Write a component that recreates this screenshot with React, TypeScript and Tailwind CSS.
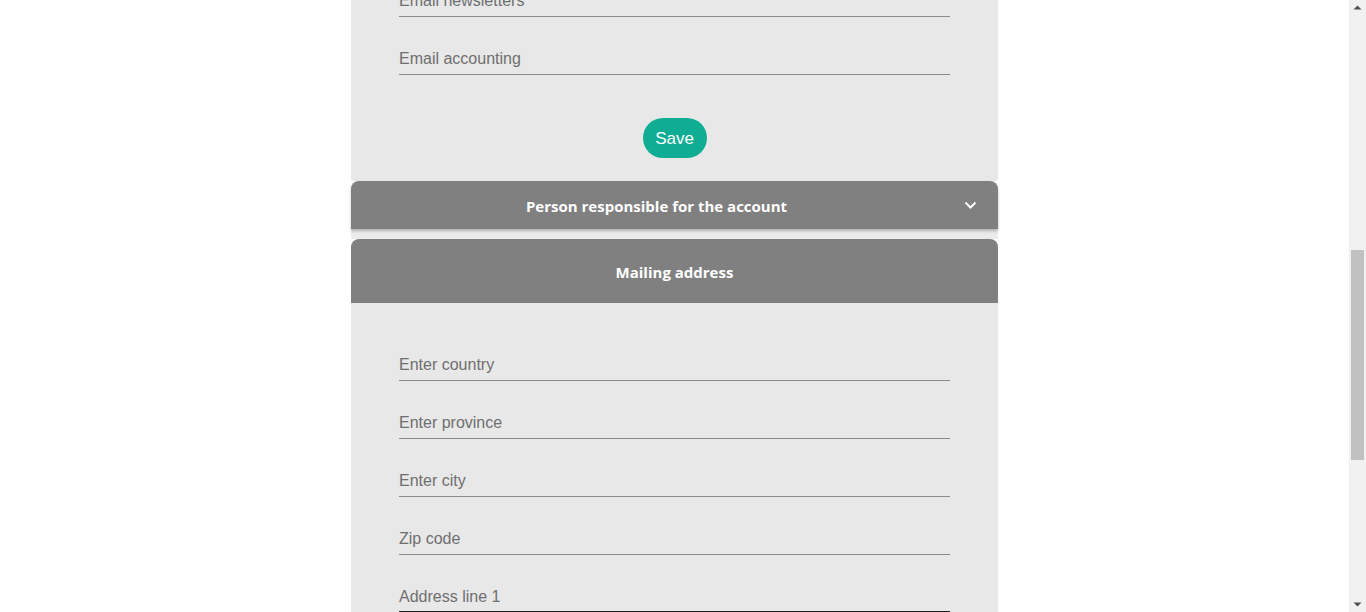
import React from "react";

function Field({ label, className = "", dark = false }: { label: string; className?: string; dark?: boolean }) {
  return (
    <div
      className={`h-[33px] flex items-center pt-[2px] ${dark ? "border-b-2 border-[#1e1e1e]" : "border-b border-[#8a8a8a]"} text-[16px] leading-[18px] text-[#6f6f6f] ${className}`}
    >
      {label}
    </div>
  );
}

export default function App() {
  return (
    <div className="flex h-[612px] w-[1366px] overflow-hidden bg-white font-['Liberation_Sans',Arial,sans-serif]">
      <div className="flex-1 flex justify-center">
        <div className="w-[647px] flex flex-col">
          <div className="bg-[#e8e8e8] px-12 mt-[-16px] pb-[23px] rounded-b-[3px]">
            <Field label="Email newsletters" />
            <Field label="Email accounting" className="mt-[25px]" />
            <div className="flex justify-center mt-[43px]">
              <button className="h-[40px] w-[64px] rounded-full bg-[#0fad93] text-white text-[17px] leading-none">
                Save
              </button>
            </div>
          </div>
          <div className="h-[48px] shrink-0 rounded-t-lg bg-[#808080] flex items-center shadow-[0_2px_3px_rgba(0,0,0,0.25)] relative z-10 font-['Open_Sans',sans-serif]">
            <div className="w-[611px] text-center text-white font-bold text-[15px] pt-[2px]">
              Person responsible for the account
            </div>
            <div className="w-[36px] flex items-center">
              <svg width="13" height="9" viewBox="0 0 13 9" className="ml-[2px]">
                <path d="M1.5 1.5 L6.5 6.5 L11.5 1.5" stroke="white" strokeWidth="2" fill="none" />
              </svg>
            </div>
          </div>
          <div className="h-[10px] shrink-0 bg-[#ebebeb]" />
          <div className="h-[64px] shrink-0 rounded-t-lg bg-[#808080] flex items-center justify-center font-['Open_Sans',sans-serif] text-white font-bold text-[15px] pt-[2px]">
            Mailing address
          </div>
          <div className="bg-[#e8e8e8] px-12 pt-[45px] flex-1">
            <Field label="Enter country" />
            <Field label="Enter province" className="mt-[25px]" />
            <Field label="Enter city" className="mt-[25px]" />
            <Field label="Zip code" className="mt-[25px]" />
            <Field label="Address line 1" className="mt-[25px]" dark />
          </div>
        </div>
      </div>
      <div className="w-[17px] h-full bg-[#f1f1f1] flex flex-col items-center justify-between py-[5px]">
        <svg width="9" height="5" viewBox="0 0 9 5">
          <path d="M0.5 4.5 L4.5 0.5 L8.5 4.5 Z" fill="#505050" />
        </svg>
        <div className="w-full flex-1 flex flex-col">
          <div className="h-[240px]" />
          <div className="h-[210px] mx-[2px] bg-[#c1c1c1]" />
        </div>
        <svg width="9" height="5" viewBox="0 0 9 5">
          <path d="M0.5 0.5 L4.5 4.5 L8.5 0.5 Z" fill="#505050" />
        </svg>
      </div>
    </div>
  );
}
